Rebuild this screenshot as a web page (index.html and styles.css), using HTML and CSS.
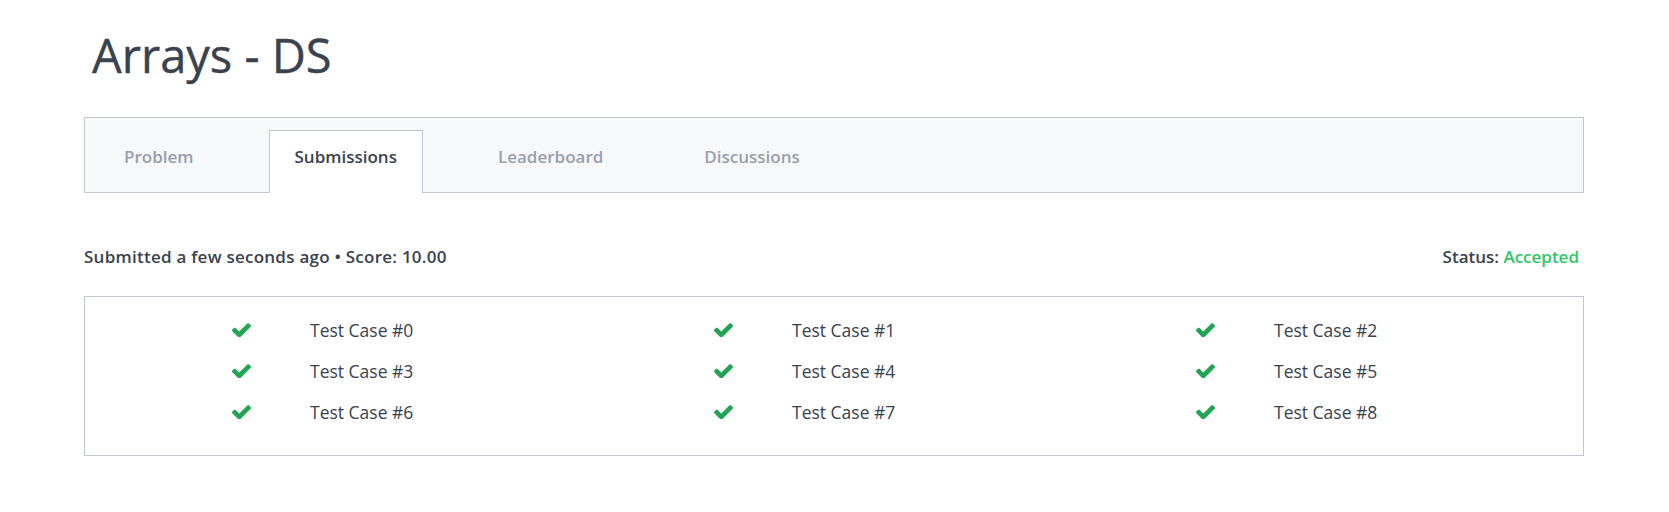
FILE: index.html
```html
<!DOCTYPE html>
<html lang="en">
<head>
<meta charset="utf-8">
<title>Arrays - DS</title>
<link rel="stylesheet" href="styles.css">
</head>
<body>
<div class="page">
  <h1 class="title">Arrays - DS</h1>
  <nav class="tabs">
    <a class="tab">Problem</a>
    <a class="tab active">Submissions</a>
    <a class="tab">Leaderboard</a>
    <a class="tab">Discussions</a>
  </nav>
  <div class="status-row">
    <span class="meta">Submitted a few seconds ago &bull; Score: 10.00</span>
    <span class="status">Status: <span class="accepted">Accepted</span></span>
  </div>
  <div class="results">
    <div class="case"><svg class="check" viewBox="121 338 1550 1118"><path d="M1671 566q0 40-28 68l-724 724-136 136q-28 28-68 28t-68-28l-136-136-362-362q-28-28-28-68t28-68l136-136q28-28 68-28t68 28l294 295 656-657q28-28 68-28t68 28l136 136q28 28 28 68z"/></svg><span class="label">Test Case #0</span></div>
    <div class="case"><svg class="check" viewBox="121 338 1550 1118"><path d="M1671 566q0 40-28 68l-724 724-136 136q-28 28-68 28t-68-28l-136-136-362-362q-28-28-28-68t28-68l136-136q28-28 68-28t68 28l294 295 656-657q28-28 68-28t68 28l136 136q28 28 28 68z"/></svg><span class="label">Test Case #1</span></div>
    <div class="case"><svg class="check" viewBox="121 338 1550 1118"><path d="M1671 566q0 40-28 68l-724 724-136 136q-28 28-68 28t-68-28l-136-136-362-362q-28-28-28-68t28-68l136-136q28-28 68-28t68 28l294 295 656-657q28-28 68-28t68 28l136 136q28 28 28 68z"/></svg><span class="label">Test Case #2</span></div>
    <div class="case"><svg class="check" viewBox="121 338 1550 1118"><path d="M1671 566q0 40-28 68l-724 724-136 136q-28 28-68 28t-68-28l-136-136-362-362q-28-28-28-68t28-68l136-136q28-28 68-28t68 28l294 295 656-657q28-28 68-28t68 28l136 136q28 28 28 68z"/></svg><span class="label">Test Case #3</span></div>
    <div class="case"><svg class="check" viewBox="121 338 1550 1118"><path d="M1671 566q0 40-28 68l-724 724-136 136q-28 28-68 28t-68-28l-136-136-362-362q-28-28-28-68t28-68l136-136q28-28 68-28t68 28l294 295 656-657q28-28 68-28t68 28l136 136q28 28 28 68z"/></svg><span class="label">Test Case #4</span></div>
    <div class="case"><svg class="check" viewBox="121 338 1550 1118"><path d="M1671 566q0 40-28 68l-724 724-136 136q-28 28-68 28t-68-28l-136-136-362-362q-28-28-28-68t28-68l136-136q28-28 68-28t68 28l294 295 656-657q28-28 68-28t68 28l136 136q28 28 28 68z"/></svg><span class="label">Test Case #5</span></div>
    <div class="case"><svg class="check" viewBox="121 338 1550 1118"><path d="M1671 566q0 40-28 68l-724 724-136 136q-28 28-68 28t-68-28l-136-136-362-362q-28-28-28-68t28-68l136-136q28-28 68-28t68 28l294 295 656-657q28-28 68-28t68 28l136 136q28 28 28 68z"/></svg><span class="label">Test Case #6</span></div>
    <div class="case"><svg class="check" viewBox="121 338 1550 1118"><path d="M1671 566q0 40-28 68l-724 724-136 136q-28 28-68 28t-68-28l-136-136-362-362q-28-28-28-68t28-68l136-136q28-28 68-28t68 28l294 295 656-657q28-28 68-28t68 28l136 136q28 28 28 68z"/></svg><span class="label">Test Case #7</span></div>
    <div class="case"><svg class="check" viewBox="121 338 1550 1118"><path d="M1671 566q0 40-28 68l-724 724-136 136q-28 28-68 28t-68-28l-136-136-362-362q-28-28-28-68t28-68l136-136q28-28 68-28t68 28l294 295 656-657q28-28 68-28t68 28l136 136q28 28 28 68z"/></svg><span class="label">Test Case #8</span></div>
  </div>
</div>
</body>
</html>
```
FILE: styles.css
```css
* { box-sizing: border-box; }
html, body { margin: 0; padding: 0; background: #ffffff; }
body {
  font-family: "Open Sans", "Noto Sans", "Liberation Sans", sans-serif;
  color: #39424e;
}
.page {
  padding: 28px 85px 0 84px;
}
.title {
  margin: 0;
  padding-left: 8px;
  font-size: 47px;
  font-weight: 400;
  line-height: 55px;
  color: #39424e;
  -webkit-text-stroke: 0.4px #39424e;
}
.tabs {
  margin-top: 34px;
  display: flex;
  align-items: flex-end;
  gap: 49px;
  padding: 12px 0 0 13px;
  background: #f7f8fa;
  border: 1px solid #c2c7d0;
  height: 76px;
}
.tab {
  display: block;
  height: 63px;
  margin-bottom: -1px;
  padding: 14px 25px 0;
  font-size: 17px;
  line-height: 24px;
  font-weight: 600;
  color: #979faf;
  border: 1px solid transparent;
  border-bottom: none;
}
.tab.active {
  background: #ffffff;
  border-color: #c2c7d0;
  color: #39424e;
}
.status-row {
  margin-top: 52px;
  display: flex;
  justify-content: space-between;
  padding-right: 5px;
  font-size: 17px;
  line-height: 24px;
  font-weight: 600;
  color: #39424e;
}
.meta { letter-spacing: 0.25px; }
.accepted { color: #2ec866; }
.results {
  margin-top: 27px;
  border: 1px solid #c2c7d0;
  padding: 21px 26px 14px;
  display: grid;
  grid-template-columns: repeat(3, 1fr);
}
.case {
  display: flex;
  align-items: center;
  height: 24px;
  margin-bottom: 17px;
  padding-left: 121px;
}
.check {
  width: 19px;
  height: 14px;
  fill: #23a455;
  flex: none;
}
.label {
  margin-left: 59px;
  font-size: 17.5px;
  line-height: 24px;
  color: #39424e;
}
```
